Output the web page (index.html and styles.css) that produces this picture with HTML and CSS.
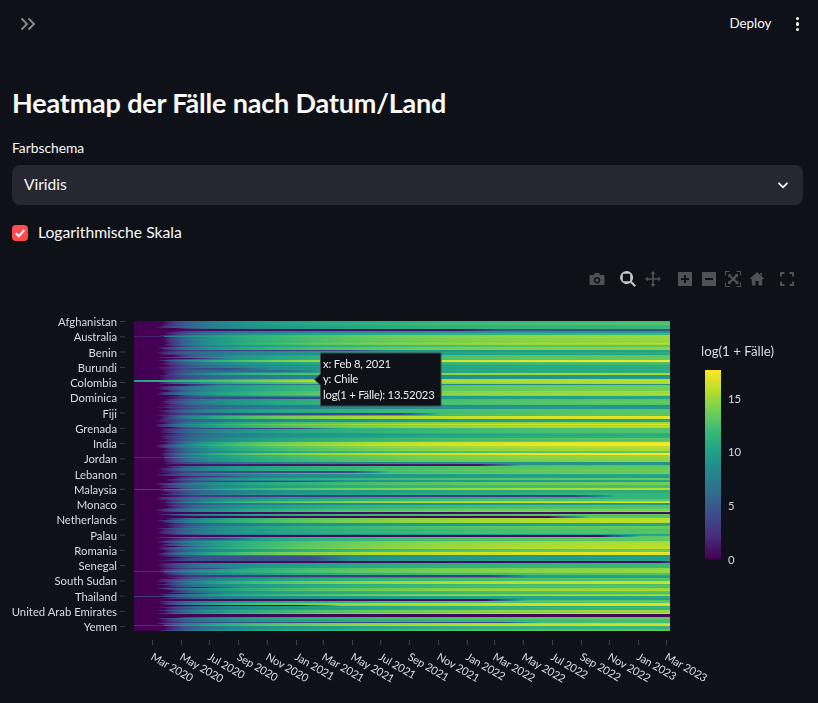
FILE: index.html
```html
<!DOCTYPE html>
<html lang="en">
<head>
    <meta charset="UTF-8">
    <meta name="viewport" content="width=device-width, initial-scale=1.0">
    <title>Heatmap</title>
    <link rel="stylesheet" href="styles.css">
</head>
<body>
    <header class="topbar">
        <svg class="expand" width="16" height="14" viewBox="0 0 16 14">
            <path d="M1.500 1.500 7 7l-5.500 5.500M8.500 1.500 14 7l-5.500 5.500"/>
        </svg>
        <div class="topbar-right">
            <span class="deploy">Deploy</span>
            <span class="kebab"><i></i><i></i><i></i></span>
        </div>
    </header>

    <main class="content">
        <h1>Heatmap der Fälle nach Datum/Land</h1>

        <div class="field-label">Farbschema</div>
        <div class="select">
            <span>Viridis</span>
            <svg width="14" height="14" viewBox="0 0 14 14">
                <path d="M2.500 4.800 7 9.300l4.500-4.500"/>
            </svg>
        </div>

        <div class="checkbox-row">
            <span class="checkbox">
                <svg width="12" height="12" viewBox="0 0 12 12"><path d="M1.800 6.200 4.800 9.200 10.300 3"/></svg>
            </span>
            <span class="checkbox-label">Logarithmische Skala</span>
        </div>

        <div class="modebar">
            <svg class="tool tool-camera" viewBox="0 0 16 16">
                <path fill-rule="evenodd" d="M1.500 4H5l1-2h4l1 2h3.500A1 1 0 0 1 15.500 5v8a1 1 0 0 1-1 1h-13a1 1 0 0 1-1-1V5a1 1 0 0 1 1-1ZM8 6a3.300 3.300 0 1 0 0 6.600A3.300 3.300 0 0 0 8 6Zm0 1.500a1.800 1.800 0 1 1 0 3.600 1.800 1.800 0 0 1 0-3.600Z"/>
            </svg>
            <svg class="tool tool-zoom active" viewBox="0 0 16 16">
                <path fill-rule="evenodd" d="M6.500 0a6.500 6.500 0 0 1 5.300 10.300l4.100 4.100-1.400 1.500-4.100-4.100A6.500 6.500 0 1 1 6.500 0ZM3.800 2.800a1 1 0 0 0-1 1v5.400a1 1 0 0 0 1 1h5.400a1 1 0 0 0 1-1V3.800a1 1 0 0 0-1-1Z"/>
            </svg>
            <svg class="tool tool-pan" viewBox="0 0 16 16">
                <path d="M8 0l2.600 2.900H8.800v4.300h4.300V5.400L16 8l-2.900 2.600V8.800H8.800v4.300h1.800L8 16l-2.600-2.900h1.800V8.800H2.900v1.800L0 8l2.900-2.600v1.800h4.300V2.900H5.400Z"/>
            </svg>
            <svg class="tool tool-plus" viewBox="0 0 16 16">
                <path fill-rule="evenodd" d="M1 1h14v14H1ZM7 4v3H4v2h3v3h2V9h3V7H9V4Z"/>
            </svg>
            <svg class="tool tool-minus" viewBox="0 0 16 16">
                <path fill-rule="evenodd" d="M1 1h14v14H1ZM4 7v2h8V7Z"/>
            </svg>
            <svg class="tool tool-auto" viewBox="0 0 16 16">
                <path d="M0 0h4.500v1H1v3.500H0ZM11.500 0H16v4.500h-1V1h-3.500ZM0 11.500h1V15h3.500v1H0ZM15 11.500h1V16h-4.500v-1H15ZM3.500 3h3L5.500 4l2.500 2.500L10.500 4l-1-1h3.500v3.500l-1-1L10 8l2.500 2.500 1-1V13H10l1-1-3-2.500L5.500 12l1 1H3V9.500l1 1L6.500 8 4 5.500l-1 1Z"/>
            </svg>
            <svg class="tool tool-home" viewBox="0 0 16 16">
                <path d="M8 1 15.500 8h-2.300v6.500H9.500V10h-3v4.500H2.800V8H.5ZM11 2h2v3l-2-2Z"/>
            </svg>
            <svg class="tool tool-full" viewBox="0 0 16 16">
                <path d="M1 1h4.500v2H3v2.500H1ZM10.500 1H15v4.500h-2V3h-2.500ZM1 10.500h2V13h2.500v2H1ZM13 10.500h2V15h-4.500v-2H13Z"/>
            </svg>
        </div>

        <div class="chart">
            <canvas id="heatmap" class="heatmap" width="536" height="310"></canvas>

            <!-- viewBox is in page coordinates, easier to line up with the plot -->
            <svg class="chart-overlay" viewBox="12 300 791 400">
                <defs>
                    <linearGradient id="viridis" x1="0" y1="1" x2="0" y2="0">
                        <stop offset="0" stop-color="#440154"/>
                        <stop offset="0.111" stop-color="#482878"/>
                        <stop offset="0.222" stop-color="#3e4989"/>
                        <stop offset="0.333" stop-color="#31688e"/>
                        <stop offset="0.444" stop-color="#26828e"/>
                        <stop offset="0.556" stop-color="#1f9e89"/>
                        <stop offset="0.667" stop-color="#35b779"/>
                        <stop offset="0.778" stop-color="#6ece58"/>
                        <stop offset="0.889" stop-color="#b5de2b"/>
                        <stop offset="1" stop-color="#fde725"/>
                    </linearGradient>
                </defs>

                <g class="ticks">
                    <path d="M120 321.500h5M120 336.800h5M120 352h5M120 367.300h5M120 382.500h5M120 397.800h5M120 413h5M120 428.300h5M120 443.600h5M120 458.800h5M120 474.100h5M120 489.300h5M120 504.600h5M120 519.800h5M120 535.100h5M120 550.400h5M120 565.600h5M120 580.900h5M120 596.100h5M120 611.400h5M120 626.600h5"/>
                </g>
                <g class="ylabels">
                    <text x="117" y="326">Afghanistan</text>
                    <text x="117" y="341.300">Australia</text>
                    <text x="117" y="356.500">Benin</text>
                    <text x="117" y="371.800">Burundi</text>
                    <text x="117" y="387">Colombia</text>
                    <text x="117" y="402.300">Dominica</text>
                    <text x="117" y="417.500">Fiji</text>
                    <text x="117" y="432.800">Grenada</text>
                    <text x="117" y="448.100">India</text>
                    <text x="117" y="463.300">Jordan</text>
                    <text x="117" y="478.600">Lebanon</text>
                    <text x="117" y="493.800">Malaysia</text>
                    <text x="117" y="509.100">Monaco</text>
                    <text x="117" y="524.300">Netherlands</text>
                    <text x="117" y="539.600">Palau</text>
                    <text x="117" y="554.900">Romania</text>
                    <text x="117" y="570.100">Senegal</text>
                    <text x="117" y="585.400">South Sudan</text>
                    <text x="117" y="600.600">Thailand</text>
                    <text x="117" y="615.900">United Arab Emirates</text>
                    <text x="117" y="631.100">Yemen</text>
                </g>

                <g class="ticks">
                    <path d="M152.500 640v5M181.500 640v5M209.500 640v5M238.500 640v5M267.500 640v5M296.500 640v5M323.500 640v5M352.500 640v5M380.500 640v5M409.500 640v5M438.500 640v5M467.500 640v5M494.500 640v5M523.500 640v5M552.500 640v5M581.500 640v5M609.500 640v5M638.500 640v5M666.500 640v5"/>
                </g>
                <g class="xlabels">
                    <text transform="translate(150 659) rotate(30)">Mar 2020</text>
                    <text transform="translate(179 659) rotate(30)">May 2020</text>
                    <text transform="translate(207 659) rotate(30)">Jul 2020</text>
                    <text transform="translate(236 659) rotate(30)">Sep 2020</text>
                    <text transform="translate(265 659) rotate(30)">Nov 2020</text>
                    <text transform="translate(294 659) rotate(30)">Jan 2021</text>
                    <text transform="translate(321 659) rotate(30)">Mar 2021</text>
                    <text transform="translate(350 659) rotate(30)">May 2021</text>
                    <text transform="translate(378 659) rotate(30)">Jul 2021</text>
                    <text transform="translate(407 659) rotate(30)">Sep 2021</text>
                    <text transform="translate(436 659) rotate(30)">Nov 2021</text>
                    <text transform="translate(465 659) rotate(30)">Jan 2022</text>
                    <text transform="translate(492 659) rotate(30)">Mar 2022</text>
                    <text transform="translate(521 659) rotate(30)">May 2022</text>
                    <text transform="translate(550 659) rotate(30)">Jul 2022</text>
                    <text transform="translate(579 659) rotate(30)">Sep 2022</text>
                    <text transform="translate(607 659) rotate(30)">Nov 2022</text>
                    <text transform="translate(636 659) rotate(30)">Jan 2023</text>
                    <text transform="translate(664 659) rotate(30)">Mar 2023</text>
                </g>

                <text class="colorbar-title" x="701" y="356">log(1 + Fälle)</text>
                <rect x="705" y="370" width="16" height="189" fill="url(#viridis)"/>
                <g class="colorbar-labels">
                    <text x="728" y="403">15</text>
                    <text x="728" y="456">10</text>
                    <text x="728" y="510">5</text>
                    <text x="728" y="564">0</text>
                </g>

                <path class="tooltip-box" d="M320.500 353H441V406H320.500V385L314.500 379.500 320.500 374Z"/>
                <g class="tooltip-text">
                    <text x="323" y="368">x: Feb 8, 2021</text>
                    <text x="323" y="383">y: Chile</text>
                    <text x="323" y="399">log(1 + Fälle): 13.52023</text>
                </g>
            </svg>
        </div>
    </main>

    <script src="chart.js"></script>
</body>
</html>
```
FILE: styles.css
```css
html, body {
    margin: 0;
    height: 100%;
    overflow: hidden;
}

body {
    font-family: 'Lato', 'Noto Sans', sans-serif;
    background-color: #0e1117;
    color: #fafafa;
}

.topbar {
    height: 48px;
    display: flex;
    align-items: center;
    justify-content: space-between;
    padding: 0 19px 0 20px;
}

.expand path {
    fill: none;
    stroke: #85878c;
    stroke-width: 2;
}

.topbar-right {
    display: flex;
    align-items: center;
    gap: 24px;
}

.deploy {
    font-size: 13.400px;
    padding-bottom: 2px;
}

.kebab {
    display: flex;
    flex-direction: column;
    gap: 2px;
}

.kebab i {
    display: block;
    width: 3.500px;
    height: 3.500px;
    border-radius: 50%;
    background-color: #fafafa;
}

.content {
    padding: 0 15px 0 12px;
}

h1 {
    margin: 35px 0 15px;
    font-size: 27px;
    line-height: 40px;
    font-weight: 700;
    letter-spacing: -0.180px;
}

.field-label {
    font-size: 13.800px;
    line-height: 20px;
    margin-bottom: 7px;
}

.select {
    height: 40px;
    box-sizing: border-box;
    padding: 0 13px 2px 12px;
    display: flex;
    align-items: center;
    justify-content: space-between;
    background-color: #262730;
    border-radius: 8px;
    font-size: 15.500px;
}

.select svg {
    margin-top: 2px;
}

.select path {
    fill: none;
    stroke: #fafafa;
    stroke-width: 1.800;
}

.checkbox-row {
    margin-top: 16px;
    height: 24px;
    display: flex;
    align-items: center;
    gap: 10px;
    font-size: 15.700px;
}

.checkbox-label {
    padding-bottom: 2px;
}

.checkbox {
    width: 16px;
    height: 16px;
    border-radius: 4px;
    background-color: #ff4b4b;
    display: flex;
    align-items: center;
    justify-content: center;
}

.checkbox path {
    fill: none;
    stroke: #fff;
    stroke-width: 2;
}

.modebar {
    margin-top: 24px;
    height: 20px;
    display: flex;
    align-items: center;
    justify-content: flex-end;
}

.tool {
    width: 16px;
    height: 16px;
    fill: #4f5157;
    flex: none;
}

.tool.active {
    fill: #c6c7c9;
}

.tool-camera { margin-right: 15px; }
.tool-zoom { margin-right: 9px; }
.tool-pan { margin-right: 16px; }
.tool-plus { margin-right: 8px; }
.tool-minus { margin-right: 8px; }
.tool-auto { margin-right: 8px; }
.tool-home { margin-right: 14px; }
.tool-full { margin-right: 8px; }

.chart {
    position: relative;
    height: 400px;
    margin-top: 11px;
}

.heatmap {
    position: absolute;
    left: 122px;
    top: 21px;
    width: 536px;
    height: 310px;
}

.chart-overlay {
    position: absolute;
    left: 0;
    top: 0;
    width: 791px;
    height: 400px;
}

.chart-overlay text {
    font-family: 'Lato', 'Noto Sans', sans-serif;
    font-size: 11.300px;
    fill: #d8dce4;
}

.ticks path {
    stroke: #3c3f46;
    stroke-width: 1;
    fill: none;
}

.ylabels text {
    text-anchor: end;
}

.chart-overlay .xlabels text {
    font-size: 11px;
    letter-spacing: -0.150px;
}

.chart-overlay .colorbar-title {
    font-size: 13.300px;
}

.tooltip-box {
    fill: #0e1117;
    stroke: #444851;
    stroke-width: 1;
}

.chart-overlay .tooltip-text text {
    fill: #eceef1;
    letter-spacing: -0.200px;
}
```
FILE: chart.js
```js
// viridis stops, evenly spaced
const VIRIDIS = [
    [68, 1, 84], [72, 40, 120], [62, 73, 137], [49, 104, 142], [38, 130, 142],
    [31, 158, 137], [53, 183, 121], [110, 206, 88], [181, 222, 43], [253, 231, 37]
];
const ZMAX = 17.6;
const W = 536;
const H = 310;
const ROW_H = 1.526;

// [height in px, final value], top to bottom
const BANDS = [
    [4,12.5],[4,12],[2,4.5],[2,9.5],[2,12],[5,15],[2,14.5],[3,15.3],[2,13],[3,14.5],
    [5,10.5],[5,13],[2,17.3],[3,12.5],[8,11],[2,15],[4,9.5],[5,15.3],[1,8.5],[6,13.5],
    [5,15],[3,10],[6,13],[4,9.5],[7,13],[3,17],[3,10],[2,15],[1,16.5],
    [1,15],[2,15.5],[2,13],[3,12.5],[5,11],[4,13],[4,17.3],[5,15.5],[2,13.5],[2,17.5],
    [2,14.5],[5,14.3],[3,9.5],[5,13],[4,13.5],[4,10],[2,13],[2,10.5],[3,13.5],[3,12.5],
    [2,15.5],[3,11],[6,11.5],[2,13],[2,16],[2,10],[4,13],[3,14.5],[2,0.6],[4,13],
    [5,15.5],[3,10.5],[4,13],
    [4,13],[2,10.5],[5,13],[8,15.5],[3,13],[3,17],[8,10],[5,12],[5,14.5],[2,13],
    [3,10],[3,13],[3,16],[4,12.5],[3,15],[3,12.5],[2,15],[4,10.5],[3,13],[3,16.5],
    [4,11.5],[3,15],[1,16],[3,0.3],[3,13],[3,12.5],[3,16],[3,11.5],[2,13]
];

// rows that stay low for a long time: [y page px, height, low value, until x page px]
const LATE = [
    [329,2,0.8,460],[350,1,3.5,350],[358,1,1,190],[368,2,4,230],[370,2,6,280],
    [384,2,1,180],[397,2,4,400],[413,2,4,400],[428,1,4,300],[464,2,1,480],
    [471,2,4,350],[476,1,2.5,210],[481,1,4,300],[495,2,3,575],[516,2,0.3,548],
    [535,2,0.5,600],[538,2,4,220],[556,5,4.5,310],[561,2,0.5,660],[568,1,3.5,210],
    [575,2,3,490],[587,1,2,200],[593,1,0.5,180],[599,2,0.5,485],[605,1,0.5,300],
    [622,1,4,500]
];

// rows with cases from the first date: [y page px, height, start value]
const EARLY = [[380,2,10],[336,1,1.5],[457,1,2],[489,1,3],[571,1,2.5],[596,1,3],[625,1,2.5]];

function color(v) {
    const t = Math.min(Math.max(v / ZMAX, 0), 1) * (VIRIDIS.length - 1);
    const i = Math.min(Math.floor(t), VIRIDIS.length - 2);
    const f = t - i;
    return VIRIDIS[i].map((c, k) => c + (VIRIDIS[i + 1][k] - c) * f);
}

// small repeatable noise so the left edge is jagged
function noise(n) {
    const s = Math.sin(n * 127.1 + 11.7) * 43758.5453;
    return s - Math.floor(s);
}

function finalValues() {
    const out = [];
    BANDS.forEach(([h, v]) => {
        for (let i = 0; i < h; i++) out.push(v);
    });
    return out;
}

function valueAt(x, y, base) {
    const row = Math.floor(y / ROW_H);
    const final = base > 2 ? base + (noise(row + 900) - 0.5) * 0.9 : base;
    const early = EARLY.find(e => y + 321 >= e[0] && y + 321 < e[0] + e[1]);
    const late = LATE.find(l => y + 321 >= l[0] && y + 321 < l[0] + l[1]);
    const onset = early ? 0 : 20 + noise(row) * 11 + (noise(row + 500) > 0.85 ? 10 : 0);
    if (x < onset) return 0;

    const t = (x - onset) / (W - onset);
    let v;
    if (early) {
        // thin line at the start, joins the normal curve further right
        v = x < 30 ? early[2] : final * (0.5 * (1 - Math.exp(-t / 0.05)) + 0.5 * (1 - Math.exp(-t / 0.3)) / 0.96);
        if (early[2] > 5) v = early[2] + (final - early[2]) * Math.min(1, t * 3);
        v = Math.max(v, early[2]);
    } else {
        v = final * (0.55 * (1 - Math.exp(-t / 0.05)) + 0.45 * (1 - Math.exp(-t / 0.3)) / 0.96);
    }
    if (late) {
        const end = late[3] - 134;
        const low = late[2] * Math.min(1, (x - onset) / 30);
        if (x < end) v = Math.min(v, low);
        else if (x < end + 40) v = low + (v - low) * (x - end) / 40;
    }
    return v;
}

function draw() {
    const ctx = document.getElementById('heatmap').getContext('2d');
    const img = ctx.createImageData(W, H);
    const finals = finalValues();
    for (let y = 0; y < H; y++) {
        for (let x = 0; x < W; x++) {
            const [r, g, b] = color(valueAt(x, y, finals[y]));
            const p = (y * W + x) * 4;
            img.data[p] = r;
            img.data[p + 1] = g;
            img.data[p + 2] = b;
            img.data[p + 3] = 255;
        }
    }
    ctx.putImageData(img, 0, 0);
}

draw();
```
